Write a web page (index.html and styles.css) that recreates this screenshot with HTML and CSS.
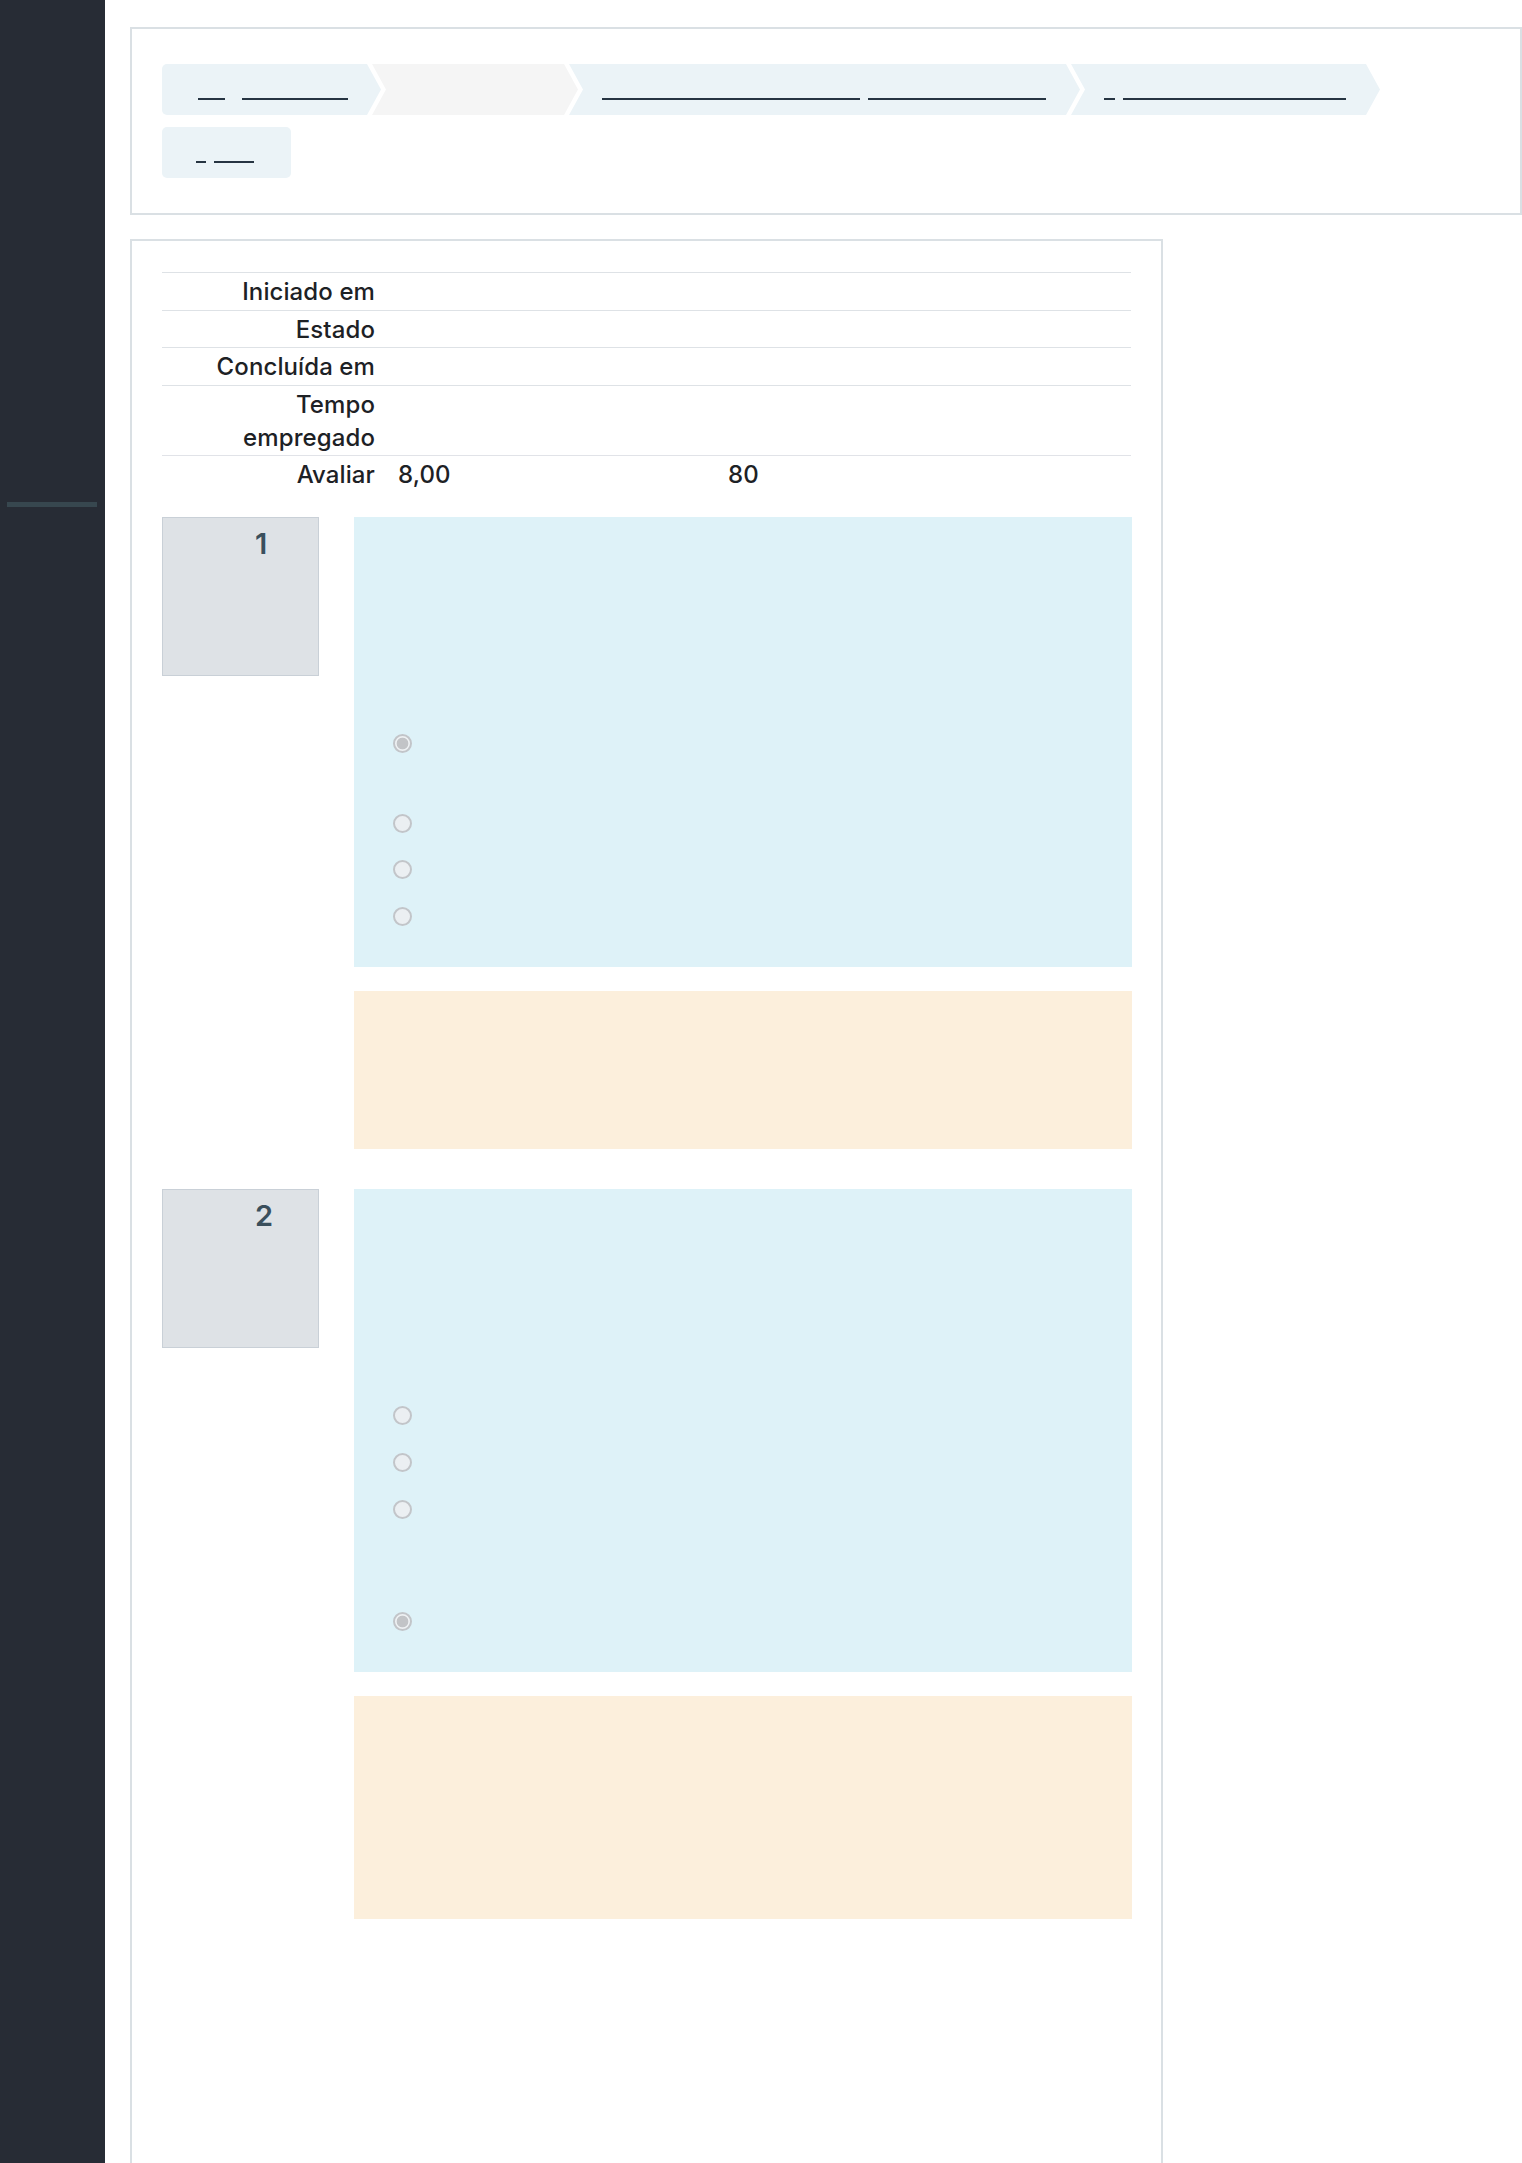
FILE: index.html
```html
<!DOCTYPE html>
<html lang="pt">
<head>
<meta charset="utf-8">
<title>Revisão da tentativa</title>
<link rel="stylesheet" href="styles.css">
</head>
<body>
<div class="page">
  <aside class="sidebar">
    <div class="sidebar-mark"></div>
  </aside>
  <main class="main">
    <section class="card nav-card">
      <nav class="steps">
        <div class="step step-first step-1">
          <span class="ul w27"></span><span class="ul w106 gap-wide"></span>
        </div>
        <div class="step step-current step-2"></div>
        <div class="step step-3">
          <span class="ul w258"></span><span class="ul w178"></span>
        </div>
        <div class="step step-4">
          <span class="ul w11"></span><span class="ul w223"></span>
        </div>
      </nav>
      <div class="step-box">
        <span class="ul w10"></span><span class="ul w40"></span>
      </div>
    </section>

    <section class="card review-card">
      <table class="summary">
        <tbody>
          <tr><th>Iniciado em</th><td></td></tr>
          <tr><th>Estado</th><td></td></tr>
          <tr><th>Concluída em</th><td></td></tr>
          <tr><th>Tempo<br>empregado</th><td></td></tr>
          <tr class="last"><th>Avaliar</th><td><span class="score">8,00</span>80</td></tr>
        </tbody>
      </table>

      <div class="que">
        <div class="info"><h3 class="qno">1</h3></div>
        <div class="content">
          <div class="formulation">
            <div class="qtext"></div>
            <div class="answer">
              <div class="opt l2"><input type="radio" class="radio" checked disabled></div>
              <div class="opt"><input type="radio" class="radio" disabled></div>
              <div class="opt"><input type="radio" class="radio" disabled></div>
              <div class="opt"><input type="radio" class="radio" disabled></div>
            </div>
          </div>
          <div class="outcome outcome-1"></div>
        </div>
      </div>

      <div class="que que-next">
        <div class="info"><h3 class="qno">2</h3></div>
        <div class="content">
          <div class="formulation">
            <div class="qtext"></div>
            <div class="answer">
              <div class="opt"><input type="radio" class="radio" disabled></div>
              <div class="opt"><input type="radio" class="radio" disabled></div>
              <div class="opt l3"><input type="radio" class="radio" disabled></div>
              <div class="opt"><input type="radio" class="radio" checked disabled></div>
            </div>
          </div>
          <div class="outcome outcome-2"></div>
        </div>
      </div>
    </section>
  </main>
</div>
</body>
</html>
```

FILE: styles.css
```css
* { box-sizing: border-box; }

html, body {
  margin: 0;
  padding: 0;
  background: #ffffff;
}

body {
  font-family: "Inter", "Liberation Sans", sans-serif;
  color: #1d2125;
}

.page {
  display: flex;
  min-height: 2163px;
}

.sidebar {
  flex: 0 0 105px;
  width: 105px;
  background: #272c35;
}

.sidebar-mark {
  margin: 502px 0 0 7px;
  width: 90px;
  height: 5px;
  background: #37474f;
}

.main {
  flex: 1 1 auto;
  min-width: 0;
  padding: 27px 0 0 25px;
}

.card {
  border: 2px solid #dae0e4;
  background: #ffffff;
}

/* ---------- top navigation card ---------- */
.nav-card {
  padding: 35px 30px 35px 30px;
}

.steps {
  display: flex;
  align-items: stretch;
}

.step {
  height: 51px;
  display: flex;
  align-items: flex-start;
  padding: 34px 0 0 33px;
  background: #ebf3f7;
  clip-path: polygon(0 0, calc(100% - 14px) 0, 100% 50%, calc(100% - 14px) 100%, 0 100%, 14px 50%);
  margin-left: -9px;
}

.step-first {
  margin-left: 0;
  padding-left: 36px;
  border-radius: 5px 0 0 5px;
  clip-path: polygon(0 0, calc(100% - 14px) 0, 100% 50%, calc(100% - 14px) 100%, 0 100%);
}

.step-current { background: #f5f5f5; }

.step-1 { width: 219px; }
.step-2 { width: 206px; }
.step-3 { width: 511px; }
.step-4 { width: 309px; }

.step-box {
  margin-top: 12px;
  width: 129px;
  height: 51px;
  display: flex;
  align-items: flex-start;
  padding: 34px 0 0 34px;
  background: #ebf3f7;
  border-radius: 5px;
}

.ul {
  display: block;
  height: 1.5px;
  background: #263442;
}

.ul + .ul { margin-left: 8px; }
.ul + .gap-wide { margin-left: 17px; }

.w10 { width: 10px; }
.w11 { width: 11px; }
.w27 { width: 27px; }
.w40 { width: 40px; margin-left: 9px; }
.w106 { width: 106px; }
.w178 { width: 178px; }
.w223 { width: 223px; }
.w258 { width: 258px; }

/* ---------- review card ---------- */
.review-card {
  width: 1033px;
  margin-top: 24px;
  padding: 31px 30px 320px 30px;
}

.summary {
  width: 100%;
  border-collapse: collapse;
  font-size: 24px;
  line-height: 33px;
  font-weight: 500;
  letter-spacing: 0.1px;
}

.summary tr { border-top: 1px solid #dee2e6; }
.summary tr.last { border-top-color: #e1e3e8; }

.summary th {
  width: 221px;
  padding: 2px 8px 1.5px 0;
  text-align: right;
  font-weight: 500;
  vertical-align: top;
}

.summary td {
  padding: 2px 0 1.5px 15px;
  vertical-align: top;
}

.score {
  display: inline-block;
  width: 330px;
}

/* ---------- questions ---------- */
.que {
  display: flex;
  align-items: flex-start;
  gap: 35px;
  margin-top: 24px;
}

.que-next { margin-top: 40px; }

.info {
  flex: 0 0 157px;
  width: 157px;
  height: 159px;
  background: #dee2e6;
  border: 1px solid #c9d0d7;
  padding: 8px 0 0 92px;
}

.qno {
  margin: 0;
  font-size: 29px;
  line-height: 35px;
  font-weight: 600;
  color: #3a4f5c;
}

.content {
  flex: 0 0 778px;
  width: 778px;
}

.formulation {
  background: #def2f8;
  padding: 20px 0 27px 38.5px;
}

.qtext { height: 183.7px; }

.opt {
  min-height: 46.67px;
  display: flex;
  align-items: flex-start;
}

.opt.l2 { min-height: 79.67px; }
.opt.l3 { min-height: 112.33px; }

.radio {
  -webkit-appearance: none;
  appearance: none;
  margin: 13.8px 0 0 0;
  width: 19px;
  height: 19px;
  border: 2px solid #c2c5c9;
  border-radius: 50%;
  background: #ebeff2;
}

.radio:checked {
  background: radial-gradient(circle, #c2c4c7 0, #c2c4c7 5.5px, #eef1f3 6.2px);
}

.outcome {
  margin-top: 24px;
  background: #fcefdc;
}

.outcome-1 { height: 158px; }
.outcome-2 { height: 223px; }
```
